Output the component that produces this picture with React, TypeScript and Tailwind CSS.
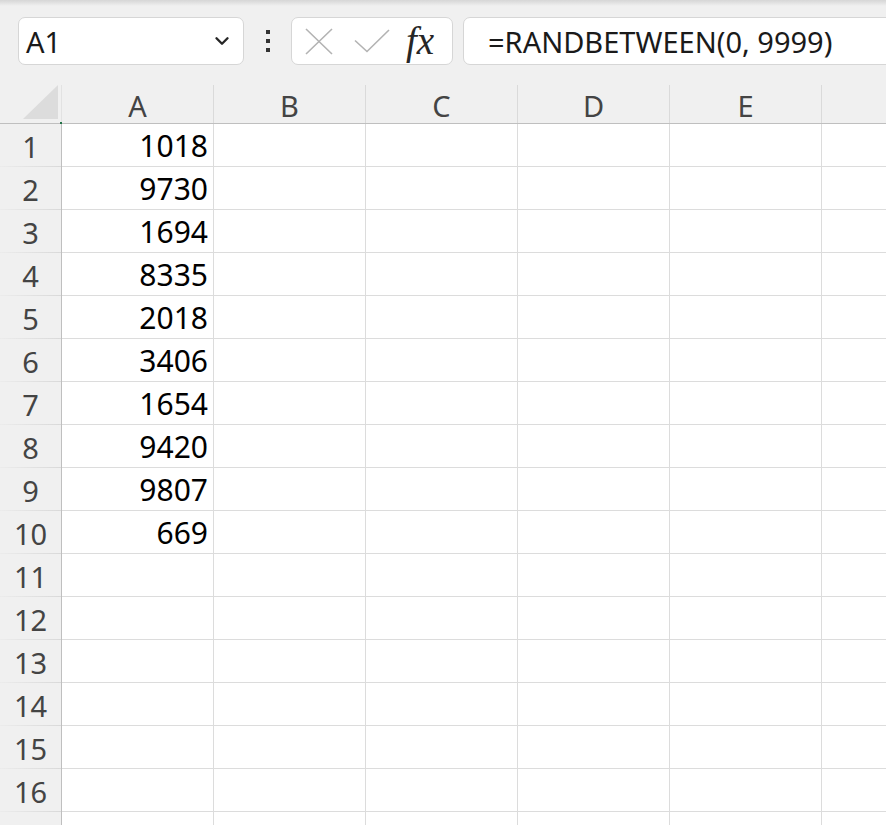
import { ChevronDown } from 'lucide-react';

const cols = ['A', 'B', 'C', 'D', 'E', ''];
const values: (number | null)[] = [1018, 9730, 1694, 8335, 2018, 3406, 1654, 9420, 9807, 669, null, null, null, null, null, null, null];

const font = { fontFamily: '"Noto Sans", "Open Sans", sans-serif' };

export default function App() {
  return (
    <div className="w-[886px] h-[825px] bg-[#f0f0f0] overflow-hidden" style={font}>
      <div className="h-[6px] bg-gradient-to-b from-[#d6d6d6] to-[#f0f0f0]" />

      {/* formula bar */}
      <div className="flex items-center h-[48px] mt-[11px] pl-[18px] whitespace-nowrap">
        <div className="w-[226px] h-[48px] shrink-0 bg-white border border-[#d6d6d6] rounded-[7px] flex items-center justify-between pl-[7px] pr-[10px]">
          <span className="text-[29px] text-[#1a1a1a] leading-none">A1</span>
          <ChevronDown className="w-[22px] h-[22px] text-[#262626]" strokeWidth={2.6} />
        </div>
        <div className="w-[47px] shrink-0 flex flex-col items-center gap-[5px]">
          <div className="w-[4px] h-[4px] bg-[#333]" />
          <div className="w-[4px] h-[4px] bg-[#333]" />
          <div className="w-[4px] h-[4px] bg-[#333]" />
        </div>
        <div className="w-[162px] h-[48px] shrink-0 bg-white border border-[#d6d6d6] rounded-[7px] relative">
          <svg className="absolute left-[13px] top-[10px]" width="28" height="27" viewBox="0 0 28 27">
            <path d="M1 1 L27 26 M27 1 L1 26" stroke="#b3b3b3" strokeWidth="1.6" fill="none" />
          </svg>
          <svg className="absolute left-[62px] top-[11px]" width="37" height="24" viewBox="0 0 37 24">
            <path d="M1 11.5 L13 22.5 L35 1" stroke="#b3b3b3" strokeWidth="1.6" fill="none" />
          </svg>
          <span
            className="absolute left-[114px] top-[-1px] text-[39px] italic text-[#262626] leading-[48px]"
            style={{ fontFamily: '"Liberation Serif", serif' }}
          >
            fx
          </span>
        </div>
        <div className="flex-1 h-[48px] ml-[10px] -mr-[20px] bg-white border border-[#d6d6d6] rounded-[7px] flex items-center pl-[24px]">
          <span className="text-[29px] text-[#1a1a1a] leading-none">=RANDBETWEEN(0, 9999)</span>
        </div>
      </div>

      {/* grid */}
      <div className="mt-[20px]">
        <div className="flex h-[39px] border-b border-[#bfbfbf]">
          <div className="w-[62px] shrink-0 relative border-r border-[#e2e2e2]">
            <svg className="absolute left-[23px] top-0" width="36" height="35" viewBox="0 0 36 35">
              <polygon points="35,0 35,34 0,34" fill="#dcdcdc" />
            </svg>
            <div className="absolute right-[-1px] bottom-[-1px] w-[2px] h-[2px] bg-[#217346]" />
          </div>
          {cols.map((c, j) => (
            <div
              key={j}
              className="w-[152px] shrink-0 border-r border-[#dadada] flex items-center justify-center text-[29px] text-[#444] leading-none pt-[2px]"
            >
              {c}
            </div>
          ))}
        </div>
        {values.map((v, i) => (
          <div key={i} className="flex h-[43px]">
            <div className="w-[62px] shrink-0 border-r border-[#bfbfbf] flex flex-col">
              <div className="flex-1 flex items-center justify-center text-[29px] text-[#444] leading-none pt-[2px]">
                {i + 1}
              </div>
              <div className="h-[1px] bg-gradient-to-r from-[#ececec] to-[#d9d9d9]" />
            </div>
            {cols.map((c, j) => (
              <div
                key={j}
                className="w-[152px] shrink-0 bg-white border-r border-b border-[#dcdcdc] flex items-center justify-end pr-[5px] text-[30px] text-black leading-none pt-[2px]"
              >
                {j === 0 && v !== null ? v : ''}
              </div>
            ))}
          </div>
        ))}
      </div>
    </div>
  );
}
